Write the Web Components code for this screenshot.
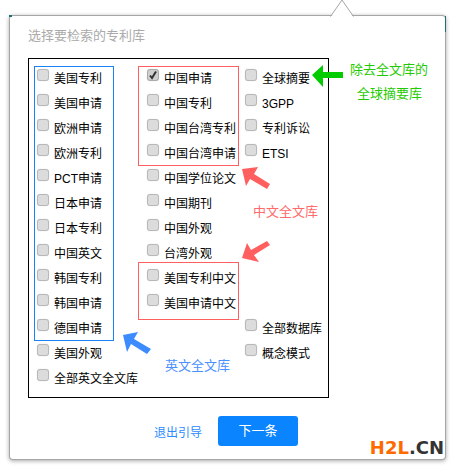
<!DOCTYPE html>
<html lang="zh">
<head>
<meta charset="utf-8">
<title>选择要检索的专利库</title>
<style>
    html, body { margin: 0; background: #fff; }
    body {
        padding: 16px 12px 11px 10px;
        font-family: "Liberation Sans", "Noto Sans CJK SC", sans-serif;
    }
</style>
</head>
<body>
<guide-popover heading="选择要检索的专利库">
    <db-panel>
        <db-column>
            <db-group color="#1a82f7">
                <db-item>美国专利</db-item>
                <db-item>美国申请</db-item>
                <db-item>欧洲申请</db-item>
                <db-item>欧洲专利</db-item>
                <db-item>PCT申请</db-item>
                <db-item>日本申请</db-item>
                <db-item>日本专利</db-item>
                <db-item>中国英文</db-item>
                <db-item>韩国专利</db-item>
                <db-item>韩国申请</db-item>
                <db-item>德国申请</db-item>
            </db-group>
            <db-item>美国外观</db-item>
            <db-item>全部英文全文库</db-item>
        </db-column>
        <db-column indent>
            <db-group color="#ff5f5f">
                <db-item checked>中国申请</db-item>
                <db-item>中国专利</db-item>
                <db-item>中国台湾专利</db-item>
                <db-item>中国台湾申请</db-item>
            </db-group>
            <db-item>中国学位论文</db-item>
            <db-item>中国期刊</db-item>
            <db-item>中国外观</db-item>
            <db-item>台湾外观</db-item>
            <db-group color="#ff5f5f" outset>
                <db-item>美国专利中文</db-item>
                <db-item>美国申请中文</db-item>
            </db-group>
        </db-column>
        <db-column>
            <db-group>
                <db-item>全球摘要</db-item>
                <db-item>3GPP</db-item>
                <db-item>专利诉讼</db-item>
                <db-item>ETSI</db-item>
            </db-group>
            <db-group style="margin-top: 150px">
                <db-item>全部数据库</db-item>
                <db-item>概念模式</db-item>
            </db-group>
        </db-column>
    </db-panel>
    <guide-arrows slot="over"></guide-arrows>
    <guide-note slot="over" x="340" y="45" color="#1fcb00">除去全文库的</guide-note>
    <guide-note slot="over" x="347" y="69" color="#1fcb00">全球摘要库</guide-note>
    <guide-note slot="over" x="243" y="187" color="#ff6a6a">中文全文库</guide-note>
    <guide-note slot="over" x="155" y="341" color="#4a90ff">英文全文库</guide-note>
    <guide-mark slot="over"></guide-mark>
</guide-popover>

<script>
    // 弹层主体
    class GuidePopover extends HTMLElement {
        constructor() {
            super();
            this.attachShadow({ mode: 'open' });
            this.shadowRoot.innerHTML = `
                <style>
                    :host {
                        display: block;
                        position: relative;
                        width: 435px;
                        height: 443px;
                        box-sizing: border-box;
                        padding: 10px 18px 0;
                        background: #fff;
                        border-radius: 3px;
                        box-shadow: 0 0 0 1px #a6a6a6, 0 1px 4px 1px rgba(0, 0, 0, .35);
                    }
                    .title {
                        font-size: 13px;
                        line-height: 20px;
                        color: #aaa;
                        margin-bottom: 12px;
                    }
                    .notch {
                        position: absolute;
                        left: 320px;
                        top: -16px;
                        display: block;
                    }
                    .tint {
                        position: absolute;
                        background: #1f6f78;
                    }
                    .tint.left { left: -1px; top: -1px; width: 3px; height: 2px; }
                    .tint.right { right: -1px; top: 0; width: 1px; height: 16px; }
                    .foot {
                        display: flex;
                        justify-content: center;
                        align-items: center;
                        gap: 16px;
                        margin-top: 18px;
                        padding-right: 3px;
                    }
                    .exit { font-size: 12px; color: #2b8cff; }
                    .next {
                        width: 80px;
                        height: 30px;
                        line-height: 30px;
                        text-align: center;
                        font-size: 13px;
                        color: #fff;
                        background: #0a84ff;
                        border-radius: 3px;
                    }
                </style>
                <svg class="notch" width="26" height="18" viewBox="0 0 26 18">
                    <path d="M1 17 L12 0 L23 17 Z" fill="#fff"/>
                    <path d="M0.5 16.5 L12 0 L23.5 16.5" fill="none" stroke="#a6a6a6"/>
                </svg>
                <span class="tint left"></span>
                <span class="tint right"></span>
                <div class="title"></div>
                <slot></slot>
                <div class="foot">
                    <span class="exit">退出引导</span>
                    <span class="next">下一条</span>
                </div>
                <slot name="over"></slot>
            `;
            this.shadowRoot.querySelector('.title').textContent = this.getAttribute('heading');
        }
    }
    customElements.define('guide-popover', GuidePopover);

    // 黑框面板
    class DbPanel extends HTMLElement {
        constructor() {
            super();
            this.attachShadow({ mode: 'open' });
            this.shadowRoot.innerHTML = `
                <style>
                    :host {
                        display: grid;
                        grid-template-columns: 80px 101px 1fr;
                        column-gap: 24px;
                        width: 301px;
                        box-sizing: border-box;
                        padding: 7px 0 6px 5px;
                        border: 1px solid #000;
                    }
                    ::slotted(:last-child) { margin-left: -21px; }
                </style>
                <slot></slot>
            `;
        }
    }
    customElements.define('db-panel', DbPanel);

    class DbColumn extends HTMLElement {
        constructor() {
            super();
            this.attachShadow({ mode: 'open' });
            this.shadowRoot.innerHTML = `
                <style>
                    :host { display: block; --item-pad: 3px; }
                    :host([indent]) { --item-pad: 9px; }
                </style>
                <slot></slot>
            `;
        }
    }
    customElements.define('db-column', DbColumn);

    // 彩色分组框
    class DbGroup extends HTMLElement {
        constructor() {
            super();
            this.attachShadow({ mode: 'open' });
            this.shadowRoot.innerHTML = `
                <style>
                    :host { display: block; outline-offset: -1px; }
                    :host([outset]) { margin-block: -4px; padding-block: 4px; }
                </style>
                <slot></slot>
            `;
            const color = this.getAttribute('color');
            if (color) {
                this.style.outline = `1px solid ${color}`;
            }
        }
    }
    customElements.define('db-group', DbGroup);

    // 复选项
    class DbItem extends HTMLElement {
        constructor() {
            super();
            this.attachShadow({ mode: 'open' });
            this.shadowRoot.innerHTML = `
                <style>
                    :host {
                        display: flex;
                        gap: 5px;
                        height: 25px;
                        padding-left: var(--item-pad, 3px);
                        font-size: 12px;
                        line-height: 27px;
                        color: #000;
                        white-space: nowrap;
                    }
                    .box {
                        flex: none;
                        width: 12px;
                        height: 12px;
                        margin-top: 3px;
                        box-sizing: border-box;
                        border: 1px solid #b8b8b8;
                        border-radius: 3px;
                        background: #dcdcdc;
                        box-shadow: 0 0 1px #ccc;
                    }
                    .box svg { display: none; }
                    :host([checked]) .box { background: #cfcfcf; border-color: #aaa; }
                    :host([checked]) .box svg { display: block; }
                </style>
                <span class="box">
                    <svg width="10" height="10" viewBox="0 0 10 10">
                        <path d="M2 5.5 L4 8 L8 1.5" fill="none" stroke="#333" stroke-width="2"/>
                    </svg>
                </span>
                <span><slot></slot></span>
            `;
        }
    }
    customElements.define('db-item', DbItem);

    // 彩色说明文字
    class GuideNote extends HTMLElement {
        constructor() {
            super();
            this.attachShadow({ mode: 'open' });
            this.shadowRoot.innerHTML = `
                <style>
                    :host {
                        position: absolute;
                        font-size: 13px;
                        line-height: 18px;
                        white-space: nowrap;
                    }
                </style>
                <slot></slot>
            `;
            this.style.left = this.getAttribute('x') + 'px';
            this.style.top = this.getAttribute('y') + 'px';
            this.style.color = this.getAttribute('color');
        }
    }
    customElements.define('guide-note', GuideNote);

    // 指示箭头，坐标按整张截图来写
    class GuideArrows extends HTMLElement {
        constructor() {
            super();
            this.attachShadow({ mode: 'open' });
            this.shadowRoot.innerHTML = `
                <style>
                    :host { position: absolute; left: 0; top: 0; width: 435px; height: 443px; pointer-events: none; }
                    svg { display: block; }
                </style>
                <svg width="435" height="443" viewBox="10 16 435 443">
                    <path d="M312 75 L323 65 L323 72 L343 72 L343 78 L323 78 L323 87 Z" fill="#0c0"/>
                    <path d="M123 335 L138 332 L134 339 L151 349 L147 354 L131 344 L127 352 Z" fill="#3c8cff"/>
                    <path d="M242 169 L258 167 L254 174 L270 184 L267 189 L250 179 L246 186 Z" fill="#ff5f5f"/>
                    <path d="M242 258 L247 243 L251 250 L267 241 L270 245 L254 255 L259 262 Z" fill="#ff5f5f"/>
                </svg>
            `;
        }
    }
    customElements.define('guide-arrows', GuideArrows);

    // 右下角水印
    class GuideMark extends HTMLElement {
        constructor() {
            super();
            this.attachShadow({ mode: 'open' });
            this.shadowRoot.innerHTML = `
                <style>
                    :host {
                        position: absolute;
                        right: 1px;
                        bottom: 1px;
                        font: bold 18px/20px "DejaVu Sans", sans-serif;
                        color: #333;
                        white-space: nowrap;
                    }
                    b { color: #ff6a00; }
                </style>
                <b>H2L</b>.CN
            `;
        }
    }
    customElements.define('guide-mark', GuideMark);
</script>
</body>
</html>
